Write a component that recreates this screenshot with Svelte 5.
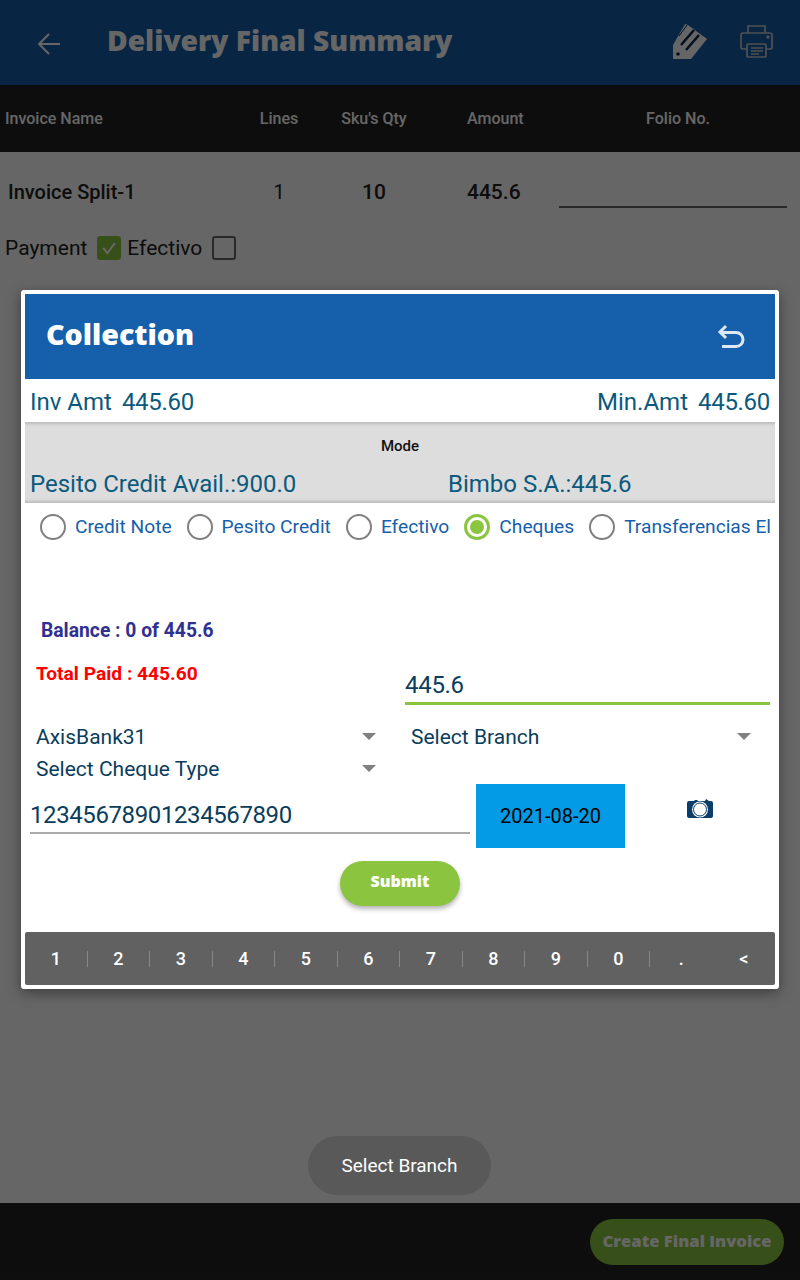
<script>
	const radios = [
		{ label: "Credit Note", on: false },
		{ label: "Pesito Credit", on: false },
		{ label: "Efectivo", on: false },
		{ label: "Cheques", on: true },
		{ label: "Transferencias El", on: false }
	];
	const keys = ["1", "2", "3", "4", "5", "6", "7", "8", "9", "0", ".", "<"];
</script>

<div class="screen">
	<header class="topbar">
		<svg class="back" viewBox="0 0 24 24" width="24" height="24">
			<path d="M23 12H2M12 2 2 12l10 10" fill="none" stroke="#fff" stroke-width="2" />
		</svg>
		<h1>Delivery Final Summary</h1>
		<svg class="pencil" viewBox="0 0 36 38" width="36" height="38">
			<path d="M2 37V23L14 2l3 1 19 14-16 20z" fill="#fff" />
			<path d="M10 23 23 8M15 28 28 13" fill="none" stroke="#09264a" stroke-width="2.5" />
			<path d="M8 14 16 3" fill="none" stroke="#09264a" stroke-width="1" />
			<circle cx="7" cy="32" r="1.8" fill="#09264a" />
		</svg>
		<svg class="printer" viewBox="0 0 34 34" width="34" height="34" fill="none" stroke="#c8c8c8" stroke-width="1.7">
			<path d="M8 9V2h17v7" />
			<path d="M7 25H3a2 2 0 0 1-2-2V11a2 2 0 0 1 2-2h27a2 2 0 0 1 2 2v12a2 2 0 0 1-2 2h-4" />
			<rect x="7" y="20" width="19" height="13" rx="1" />
			<path d="M11 24h12M11 27h12M11 30h8" stroke-width="1.4" />
			<circle cx="28" cy="13" r="0.8" />
		</svg>
	</header>

	<div class="thead">
		<span class="c-name">Invoice Name</span>
		<span class="c-lines">Lines</span>
		<span class="c-qty">Sku's Qty</span>
		<span class="c-amt">Amount</span>
		<span class="c-folio">Folio No.</span>
	</div>

	<div class="trow">
		<span class="c-name strong">Invoice Split-1</span>
		<span class="c-lines plain">1</span>
		<span class="c-qty strong num">10</span>
		<span class="c-amt strong num">445.6</span>
		<span class="folio-line"></span>
	</div>

	<div class="payment">
		<span>Payment</span>
		<span class="check on">
			<svg viewBox="0 0 24 24" width="24" height="24">
				<path d="M5 12l5 6 9-12" fill="none" stroke="#fff" stroke-width="2.500" />
			</svg>
		</span>
		<span>Efectivo</span>
		<span class="check"></span>
	</div>

	<div class="spacer"></div>

	<footer class="bottom">
		<button class="create">Create Final Invoice</button>
	</footer>

	<div class="scrim"></div>

	<section class="dialog">
		<div class="dlg-head">
			<h2>Collection</h2>
			<svg viewBox="0 0 30 26" width="30" height="26">
				<path d="M9 2 3 8l6 6M4 8.500h15a7 7 0 0 1 0 14H5" fill="none" stroke="#dce8f5" stroke-width="3" />
			</svg>
		</div>

		<div class="amounts">
			<span class="amount"><span>Inv Amt</span><span class="fig">445.60</span></span>
			<span class="amount"><span>Min.Amt</span><span class="fig">445.60</span></span>
		</div>

		<div class="mode">
			<div class="mode-title">Mode</div>
			<div class="mode-vals">
				<span class="m1">Pesito Credit Avail.:900.0</span>
				<span>Bimbo S.A.:445.6</span>
			</div>
		</div>

		<div class="radios">
			{#each radios as r}
				<div class="radio" class:on={r.on}>
					<span class="dot"></span>
					<span class="rlabel">{r.label}</span>
				</div>
			{/each}
		</div>

		<div class="balance">Balance : 0 of 445.6</div>

		<div class="paid-row">
			<div class="paid">Total Paid : 445.60</div>
			<div class="paid-input">445.6</div>
		</div>

		<div class="selects">
			<div class="select">AxisBank31<i></i></div>
			<div class="select second">Select Branch<i></i></div>
			<div class="select">Select Cheque Type<i></i></div>
		</div>

		<div class="cheque-row">
			<div class="cheque-no">12345678901234567890</div>
			<div class="date">2021-08-20</div>
			<div class="cam">
				<svg viewBox="0 0 28 22" width="28" height="22">
					<path d="M3 3h5l1-1h2l1 1h7l1-2 3 2h2a2 2 0 0 1 2 2v13a2 2 0 0 1-2 2H3a2 2 0 0 1-2-2V5a2 2 0 0 1 2-2z" fill="#0a3d68" />
					<circle cx="14" cy="11.500" r="8" fill="#fff" />
					<circle cx="14" cy="11.500" r="6.500" fill="none" stroke="#0a3d68" stroke-width="1" />
				</svg>
			</div>
		</div>

		<div class="submit-wrap"><button class="submit">Submit</button></div>

		<div class="keypad">
			{#each keys as k}
				<span class="key">{k}</span>
			{/each}
		</div>
	</section>

	<div class="toast">Select Branch</div>
</div>

<style>
	:global(body) {
		margin: 0;
		font-family: Roboto, "Liberation Sans", sans-serif;
	}

	.screen {
		position: relative;
		width: 800px;
		height: 1280px;
		overflow: hidden;
		background: #fff;
		display: flex;
		flex-direction: column;
	}

	.topbar {
		height: 85px;
		background: #1660ab;
		display: flex;
		align-items: center;
		padding: 0 26px 0 37px;
		box-sizing: border-box;
	}

	.back {
		margin-top: 2px;
	}

	h1 {
		margin: 0 0 6px 46px;
		flex: 1;
		color: #fff;
		font-family: "Open Sans", sans-serif;
		font-weight: 800;
		font-size: 28.200px;
	}

	.pencil {
		margin: 0 33px 4px 0;
	}

	.printer {
		margin-bottom: 4px;
	}

	.thead,
	.trow {
		display: flex;
		align-items: center;
		position: relative;
	}

	.thead {
		height: 67px;
		background: #222;
		color: #fff;
		font-size: 16px;
		font-weight: 500;
	}

	.trow {
		height: 80px;
		color: #222;
		font-size: 20px;
	}

	.c-name {
		width: 250px;
		padding-left: 5px;
		box-sizing: border-box;
	}

	.trow .c-name {
		padding-left: 8px;
	}

	.c-lines {
		width: 58px;
		text-align: center;
	}

	.c-qty {
		width: 132px;
		text-align: center;
	}

	.c-amt {
		width: 119px;
		padding-left: 27px;
		box-sizing: border-box;
	}

	.c-folio {
		width: 238px;
		text-align: center;
	}

	.strong {
		font-weight: 500;
	}

	.plain {
		font-weight: 400;
	}

	.num {
		font-size: 21px;
	}

	.folio-line {
		width: 228px;
		height: 2px;
		margin-top: 30px;
		background: #666;
	}

	.payment {
		display: flex;
		align-items: center;
		gap: 7px;
		padding-left: 5px;
		height: 32px;
		font-size: 21px;
		color: #222;
	}

	.check {
		width: 20px;
		height: 20px;
		border: 2px solid #666;
		border-radius: 3px;
		margin-left: 3px;
		display: flex;
		align-items: center;
		justify-content: center;
		background: transparent;
		box-sizing: content-box;
	}

	.check.on {
		background: #8bc53f;
		border-color: #8bc53f;
		margin-left: 3px;
		margin-right: -1px;
	}

	.spacer {
		flex: 1;
	}

	.bottom {
		height: 77px;
		background: #222;
		display: flex;
		align-items: center;
		justify-content: flex-end;
		padding-right: 16px;
	}

	.create {
		width: 194px;
		height: 46px;
		margin-top: 1px;
		border: 0;
		border-radius: 23px;
		background: #8bc53f;
		color: #fff;
		font-family: "Open Sans", sans-serif;
		font-weight: 800;
		font-size: 16.600px;
		padding: 0 0 4px;
		white-space: nowrap;
	}

	.scrim {
		position: absolute;
		inset: 0;
		background: rgba(0, 0, 0, 0.6);
	}

	.dialog {
		position: absolute;
		left: 21px;
		top: 290px;
		width: 758px;
		height: 699px;
		box-sizing: border-box;
		padding: 4px;
		background: #fff;
		border-radius: 3px;
		box-shadow: 0 4px 14px rgba(0, 0, 0, 0.4);
		display: flex;
		flex-direction: column;
	}

	.dlg-head {
		height: 85px;
		background: #1660ab;
		display: flex;
		align-items: center;
		justify-content: space-between;
		padding: 0 28px 0 21px;
		color: #fff;
		flex: none;
	}

	h2 {
		margin: 0 0 7px;
		font-family: "Open Sans", sans-serif;
		font-weight: 800;
		font-size: 28.600px;
	}

	.amounts {
		height: 43px;
		display: flex;
		align-items: center;
		justify-content: space-between;
		padding: 3px 5px 0;
		box-sizing: border-box;
		color: #0b5a7c;
		font-size: 24px;
		flex: none;
	}

	.amount {
		display: flex;
		gap: 10px;
	}

	.fig {
		letter-spacing: -0.3px;
	}

	.mode {
		height: 81px;
		background: #ddd;
		box-shadow: inset 0 4px 3px -2px #bbb, inset 0 -4px 3px -2px #bbb;
		flex: none;
		color: #0b5a7c;
		font-size: 24px;
	}

	.mode-title {
		text-align: center;
		color: #111;
		font-size: 15px;
		font-weight: 500;
		padding-top: 15px;
		height: 35px;
		box-sizing: border-box;
	}

	.mode-vals {
		display: flex;
		padding: 13px 5px 0;
	}

	.m1 {
		width: 418px;
	}

	.radios {
		height: 47px;
		display: flex;
		align-items: center;
		padding-left: 15px;
		overflow: hidden;
		flex: none;
		font-size: 19.200px;
		color: #1660ab;
	}

	.radio {
		display: flex;
		align-items: center;
		gap: 9px;
		margin-right: 15px;
		flex: none;
	}

	.dot {
		width: 22px;
		height: 22px;
		border: 2px solid #808080;
		border-radius: 50%;
		display: block;
		position: relative;
		flex: none;
	}

	.radio.on .dot {
		border: 3px solid #8bc53f;
		width: 20px;
		height: 20px;
	}

	.radio.on .dot::after {
		content: "";
		position: absolute;
		inset: 3px;
		border-radius: 50%;
		background: #8bc53f;
	}

	.balance {
		margin: 70px 0 0 16px;
		height: 22px;
		line-height: 22px;
		font-size: 19.300px;
		font-weight: 700;
		color: #2e3192;
		flex: none;
	}

	.paid-row {
		display: flex;
		margin-top: 16px;
		height: 48px;
		flex: none;
	}

	.paid {
		width: 380px;
		padding: 5px 0 0 11px;
		box-sizing: border-box;
		font-size: 19.200px;
		font-weight: 700;
		color: #f00;
		line-height: 22px;
	}

	.paid-input {
		width: 365px;
		height: 43px;
		margin-top: 4px;
		box-sizing: border-box;
		border-bottom: 3px solid #8bc53f;
		color: #0a3d5c;
		font-size: 24px;
		line-height: 46px;
		letter-spacing: -0.3px;
	}

	.selects {
		display: grid;
		grid-template-columns: 359px 360px;
		column-gap: 16px;
		padding: 15px 0 0 11px;
		flex: none;
		color: #0a3d5c;
		font-size: 21px;
	}

	.select {
		height: 32px;
		line-height: 32px;
		position: relative;
	}

	.select.second {
		padding-left: 0;
	}

	.select i {
		position: absolute;
		right: 19px;
		top: 12px;
		border-left: 7px solid transparent;
		border-right: 7px solid transparent;
		border-top: 7px solid #808080;
	}

	.select.second i {
		right: 20px;
	}

	.cheque-row {
		display: flex;
		margin-top: -1px;
		height: 64px;
		flex: none;
	}

	.cheque-no {
		width: 440px;
		height: 50px;
		margin: 0 6px 0 5px;
		box-sizing: border-box;
		border-bottom: 2px solid #aaa;
		color: #0a3d5c;
		font-size: 24px;
		letter-spacing: -0.4px;
		line-height: 62px;
	}

	.date {
		width: 149px;
		height: 64px;
		background: #039be5;
		color: #000;
		font-size: 20px;
		display: flex;
		align-items: center;
		justify-content: center;
	}

	.cam {
		margin: 14px 0 0 61px;
		line-height: 0;
	}

	.submit-wrap {
		display: flex;
		justify-content: center;
		margin-top: 13px;
		flex: none;
	}

	.submit {
		width: 120px;
		height: 45px;
		border: 0;
		border-radius: 23px;
		background: #8bc53f;
		color: #fff;
		font-family: "Open Sans", sans-serif;
		font-weight: 800;
		font-size: 16px;
		padding: 0 0 5px;
		box-shadow: 0 3px 5px rgba(0, 0, 0, 0.3);
	}

	.keypad {
		margin-top: auto;
		height: 53px;
		background: #616161;
		border-radius: 2px;
		display: grid;
		grid-template-columns: repeat(12, 1fr);
		align-items: center;
		flex: none;
		color: #fff;
		font-size: 18px;
		font-weight: 500;
	}

	.key {
		text-align: center;
		height: 16px;
		line-height: 16px;
		border-right: 1px solid #888;
		margin-top: 1px;
	}

	.key:nth-child(n + 11) {
		border-right: 0;
	}

	.toast {
		position: absolute;
		left: 308px;
		top: 1136px;
		width: 183px;
		height: 59px;
		border-radius: 30px;
		background: #595959;
		color: #fff;
		font-size: 19px;
		display: flex;
		align-items: center;
		justify-content: center;
	}
</style>
